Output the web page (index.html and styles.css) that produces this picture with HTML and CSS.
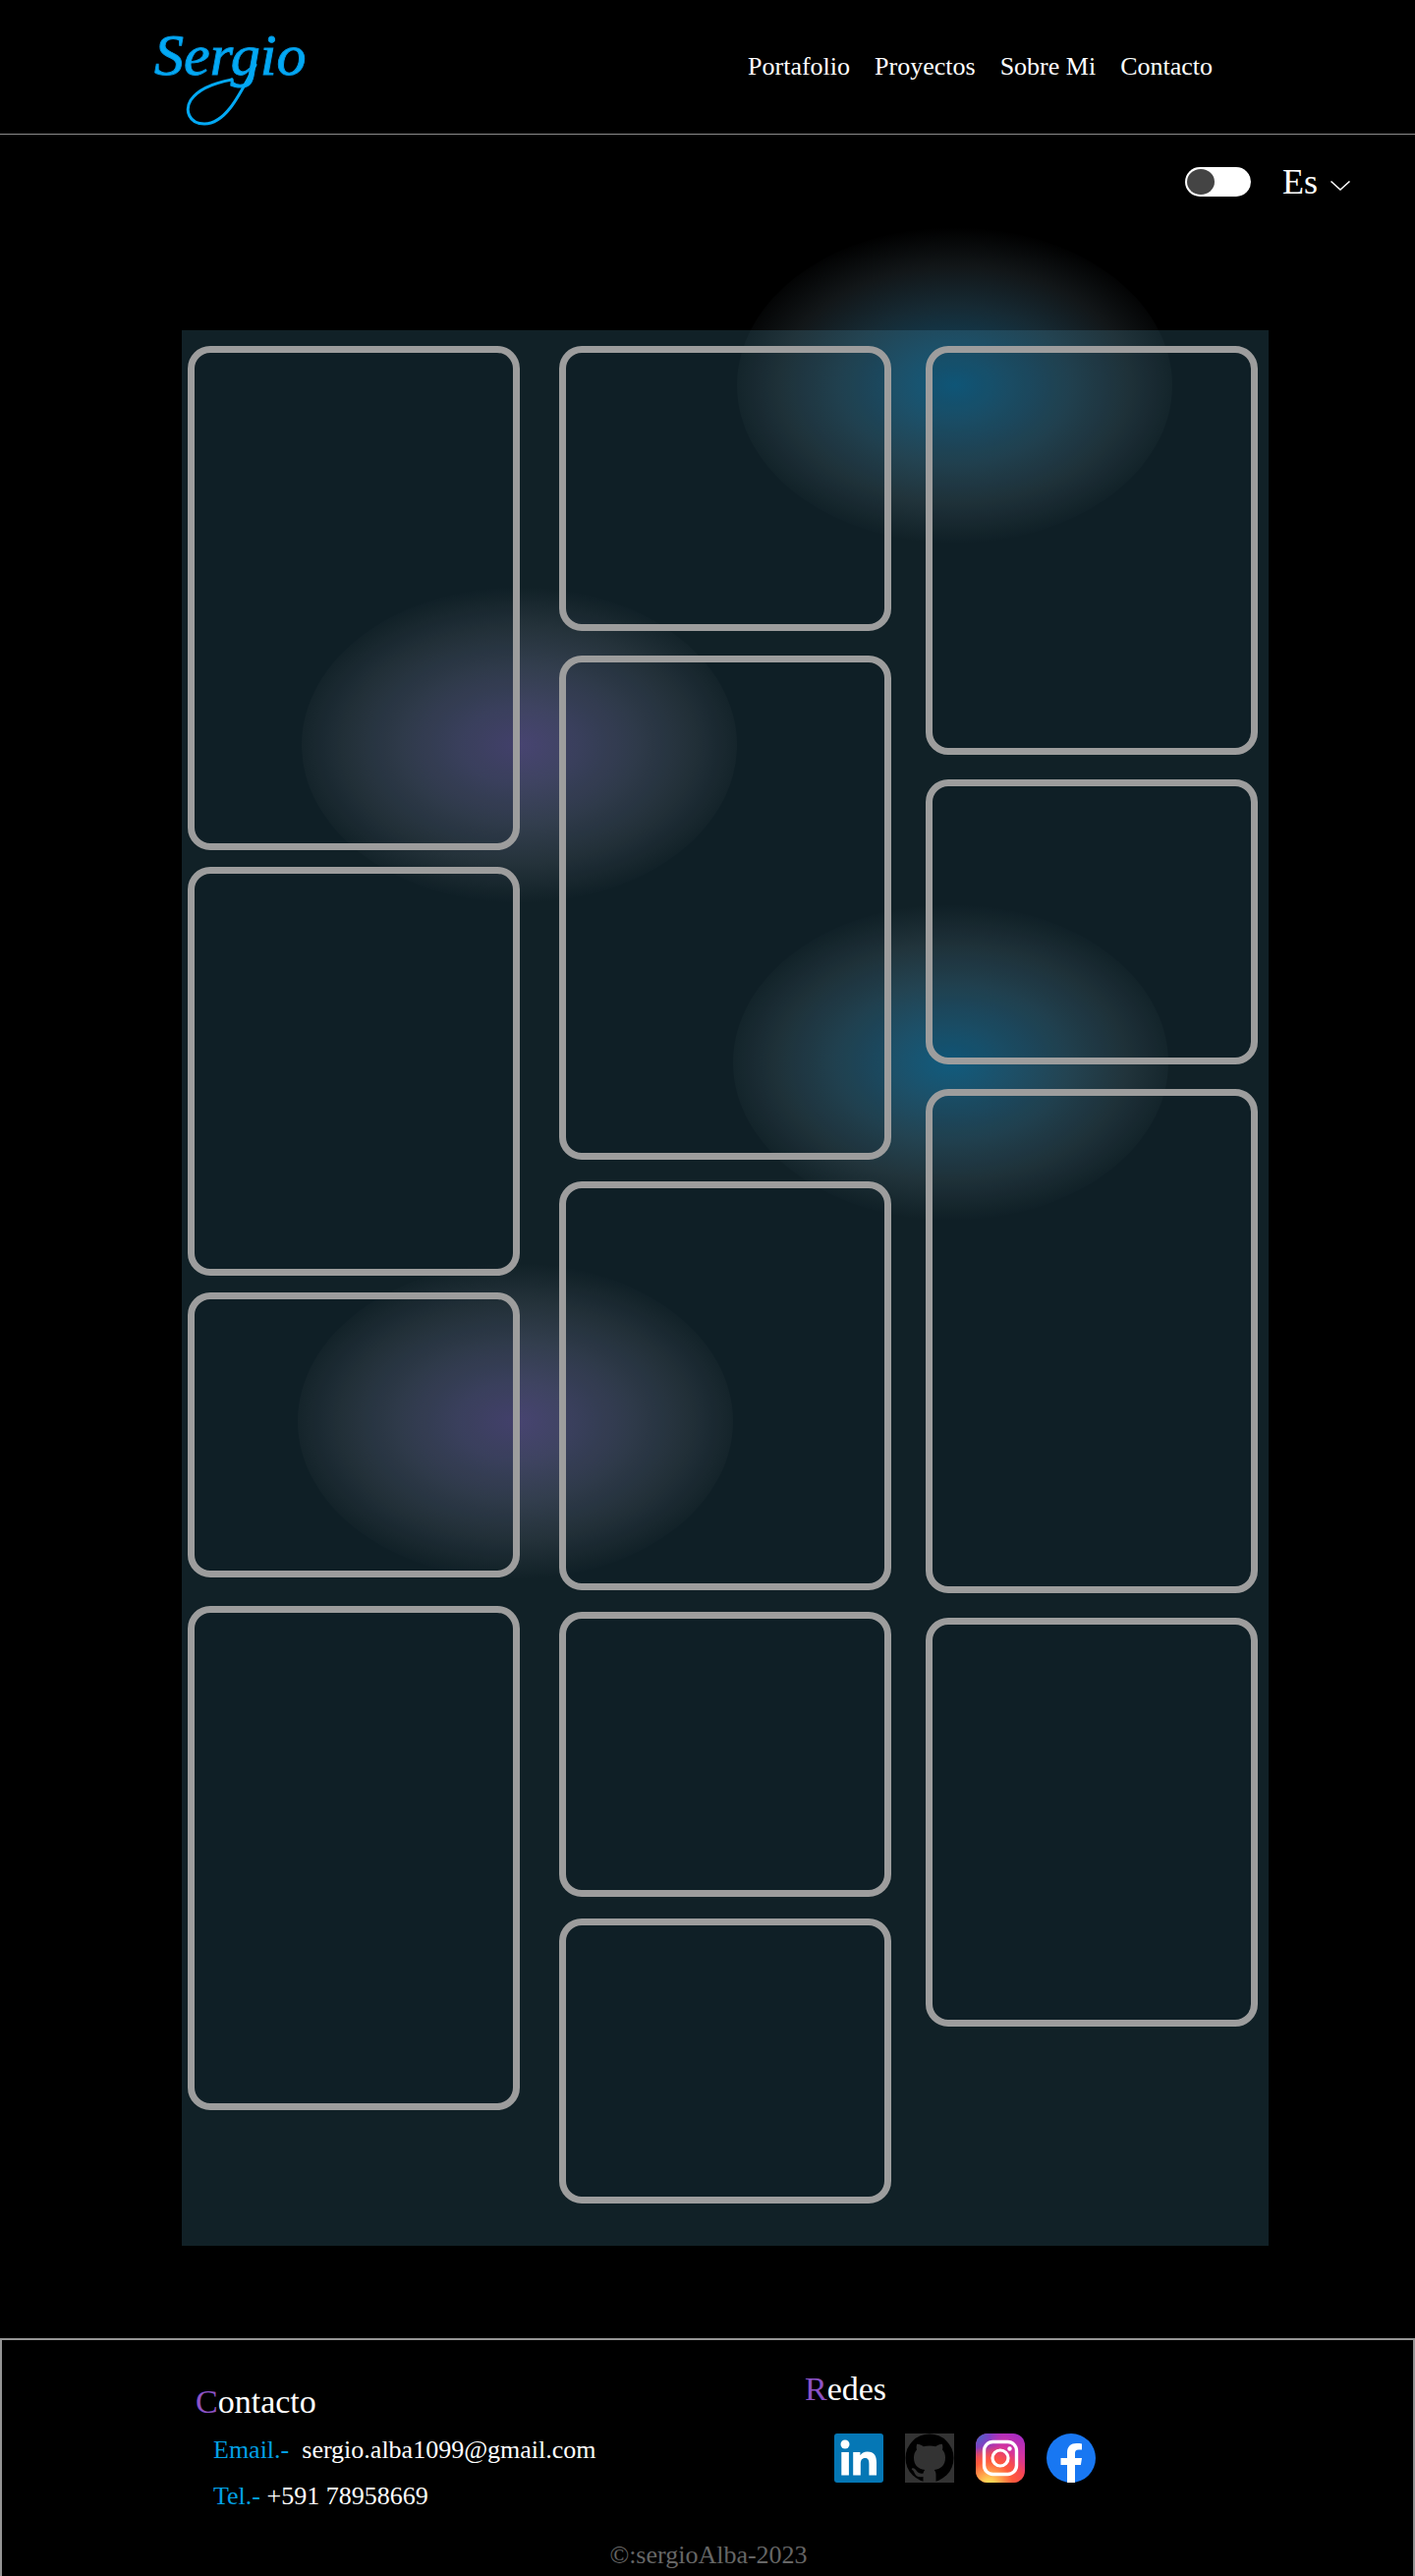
FILE: index.html
```html
<!DOCTYPE html>
<html lang="es">
<head>
<meta charset="utf-8">
<meta name="viewport" content="width=device-width, initial-scale=1">
<title>Sergio - Portafolio</title>
<link rel="stylesheet" href="styles.css">
</head>
<body>
<header class="header">
  <a class="logo" href="#" aria-label="Sergio">
    <svg width="165" height="116" viewBox="0 0 165 116">
      <text class="logo-text" x="3" y="60">Sergio</text>
      <path class="logo-tail" d="M106 50C90 80 76 110 54 110C38 110 34 96 40 86C48 74 66 68 82 65"/>
    </svg>
  </a>
  <nav class="nav">
    <a href="#portafolio">Portafolio</a>
    <a href="#proyectos">Proyectos</a>
    <a href="#sobre-mi">Sobre Mi</a>
    <a href="#contacto">Contacto</a>
  </nav>
</header>

<div class="settings">
  <input class="switch" type="checkbox" role="switch" aria-label="Tema">
  <label class="language">
    <select class="language-select" aria-label="Idioma"><option>Es</option></select>
    <svg width="20" height="10" viewBox="0 0 20 10" fill="none" stroke="#fff" stroke-width="1.500"><path d="M.5.5 10 9l9.500-8.500"/></svg>
  </label>
</div>

<main class="gallery" id="proyectos">
  <div class="glow glow-blue glow-a"></div>
  <div class="glow glow-purple glow-b"></div>
  <div class="glow glow-blue glow-c"></div>
  <div class="glow glow-purple glow-d"></div>
  <div class="column column-first">
    <article class="card card-tall"></article>
    <article class="card card-medium"></article>
    <article class="card card-small card-spaced"></article>
    <article class="card card-tall"></article>
  </div>
  <div class="column column-middle">
    <article class="card card-small card-lead"></article>
    <article class="card card-tall"></article>
    <article class="card card-medium"></article>
    <article class="card card-small"></article>
    <article class="card card-small"></article>
  </div>
  <div class="column column-last">
    <article class="card card-medium"></article>
    <article class="card card-small"></article>
    <article class="card card-tall"></article>
    <article class="card card-medium"></article>
  </div>
</main>

<footer class="footer" id="contacto">
  <div class="footer-columns">
    <section class="contact">
      <h2 class="title"><span class="initial">C</span>ontacto</h2>
      <p class="line"><span class="key">Email.-</span>&nbsp; <a href="mailto:sergio.alba1099@gmail.com">sergio.alba1099@gmail.com</a></p>
      <p class="line"><span class="key">Tel.-</span> <a href="tel:+59178958669">+591 78958669</a></p>
    </section>
    <section class="social">
      <h2 class="title"><span class="initial">R</span>edes</h2>
      <div class="icons">
        <a href="#linkedin" aria-label="LinkedIn"><svg width="50" height="50" viewBox="0 0 50 50">
          <rect width="50" height="50" rx="3" fill="#0577b5"/>
          <g fill="#fff"><circle cx="11" cy="11" r="4.500"/><path d="M7.300 19h7.600v23.500H7.300zM19.200 19h7.200v3.200c1.400-2.400 4-3.800 7.300-3.800 7 0 9.300 4.300 9.300 11.200v12.900h-7.600V31c0-3.500-.7-6-4-6-3.400 0-4.600 2.300-4.600 6v11.500h-7.600z"/></g>
        </svg></a>
        <a href="#github" aria-label="GitHub"><svg width="50" height="50" viewBox="0 0 50 50">
          <rect width="50" height="50" fill="#333"/>
          <circle cx="25" cy="25" r="24.500" fill="#000"/>
          <path fill="#333" d="M18.500 50v-6c-5 1.200-7.500-.6-9-4-.8-1.800-1.500-2.700-2.700-3.500 0-1.500 2.200-1.500 3.500-.2 2.600 3 3.500 5.200 8.300 4.200.2-1.600.8-2.700 1.700-3.600C13 36 9 32 9 24.500c0-3.300 1-6 3-8-.6-2-.5-4 .2-5.800 2.500 0 4.600 1.200 6.600 2.600 4-1 8.400-1 12.400 0 2-1.400 4.100-2.600 6.600-2.600.7 1.800.8 3.800.2 5.800 2 2 3 4.700 3 8 0 7.500-4 11.500-11.300 12.400 1.200 1.200 1.800 2.800 1.800 5V50z"/>
        </svg></a>
        <a href="#instagram" aria-label="Instagram"><svg width="50" height="50" viewBox="0 0 50 50">
          <defs>
            <linearGradient id="ig-base" x1="0.300" y1="1" x2="0.800" y2="0"><stop offset="0" stop-color="#ff5c3a"/><stop offset=".4" stop-color="#f4415a"/><stop offset=".7" stop-color="#d233a0"/><stop offset="1" stop-color="#a82cc4"/></linearGradient>
            <radialGradient id="ig-warm" cx=".27" cy="1.050" r=".8"><stop offset="0" stop-color="#ffdc55"/><stop offset=".15" stop-color="#ffd055"/><stop offset=".6" stop-color="#ff5c3c" stop-opacity=".95"/><stop offset="1" stop-color="#ff543e" stop-opacity="0"/></radialGradient>
            <radialGradient id="ig-cool" cx="0" cy="0" r=".6"><stop offset="0" stop-color="#3771c8"/><stop offset=".5" stop-color="#7a3fc9" stop-opacity=".9"/><stop offset="1" stop-color="#a030c8" stop-opacity="0"/></radialGradient>
          </defs>
          <rect width="50" height="50" rx="12" fill="url(#ig-base)"/><rect width="50" height="50" rx="12" fill="url(#ig-cool)"/><rect width="50" height="50" rx="12" fill="url(#ig-warm)"/>
          <rect x="8.500" y="8.500" width="33" height="33" rx="9" fill="none" stroke="#fff" stroke-width="3.400"/>
          <circle cx="25" cy="25" r="8" fill="none" stroke="#fff" stroke-width="3.200"/><circle cx="34.500" cy="15.500" r="2.200" fill="#fff"/>
        </svg></a>
        <a href="#facebook" aria-label="Facebook"><svg width="50" height="50" viewBox="0 0 50 50">
          <circle cx="25" cy="25" r="25" fill="#1877f2"/>
          <path fill="#fff" d="M21 50V32h-6.500v-7H21v-5.500C21 13 25 10 30.500 10c2.200 0 4 .2 5.500.4v6h-3.200c-3 0-3.800 1.600-3.800 3.600v5h7l-1.100 7H29v18z"/>
        </svg></a>
      </div>
    </section>
  </div>
  <p class="copyright">©:sergioAlba-2023</p>
</footer>
</body>
</html>
```
FILE: styles.css
```css
* { box-sizing: border-box; }

body {
  margin: 0;
  background: #000;
  color: #fff;
  font-family: "Liberation Serif", serif;
  font-size: 26px;
  line-height: 30px;
}

a { color: inherit; text-decoration: none; }
svg { display: block; }

.header {
  display: flex;
  justify-content: space-between;
  align-items: flex-start;
  min-height: 137px;
  padding: 16px 206px 0 154px;
  border-bottom: 1px solid #8c8c8c;
}

.logo-text {
  fill: #03a9f4;
  stroke: #0399e4;
  stroke-width: 1px;
  font-size: 60px;
  font-style: italic;
}

.logo-tail {
  fill: none;
  stroke: #03a9f4;
  stroke-width: 3px;
  stroke-linecap: round;
}

.nav { display: flex; gap: 25px; padding-top: 37px; }

.settings {
  display: flex;
  justify-content: flex-end;
  align-items: center;
  gap: 32px;
  padding: 27px 66px 0 0;
}

.switch {
  appearance: none;
  display: flex;
  align-items: center;
  width: 67px;
  height: 30px;
  margin: 0;
  padding: 2px;
  border-radius: 15px;
  background: #fff;
}

.switch::before {
  content: "";
  width: 28px;
  height: 26px;
  border-radius: 50%;
  background: #444;
}

.switch:checked { justify-content: flex-end; }

.language { display: flex; align-items: center; gap: 13px; }
.language svg { margin-top: 8px; }

.language-select {
  appearance: none;
  width: 36px;
  padding: 0;
  border: 0;
  background: transparent;
  color: #fff;
  font: 36px/42px "Liberation Serif", serif;
}

.gallery {
  position: relative;
  display: flex;
  margin: 130px 149px 94px 185px;
  padding: 16px 11px 43px 6px;
  background: #112127;
}

.column { position: relative; display: flex; flex: 1; flex-direction: column; }
.column-first { gap: 17px; margin-right: 40px; }
.column-middle { gap: 22px; margin-right: 35px; }
.column-last { gap: 25px; }

.card {
  border: 7px solid #9d9d9d;
  border-radius: 23px;
  background: rgba(0, 20, 30, 0.07);
}

.card-small { height: 290px; }
.card-medium { height: 416px; }
.card-tall { height: 513px; }
.card-spaced { margin-bottom: 12px; }
.card-lead { margin-bottom: 3px; }

/* Soft lights that float behind the cards and spill over the panel edge */
.glow {
  position: absolute;
  width: 443px;
  height: 322px;
  border-radius: 50%;
  pointer-events: none;
}

.glow-blue {
  background: radial-gradient(ellipse 54% 50%, rgba(16, 172, 246, 0.42), rgba(52, 176, 238, 0.33) 25%, rgba(100, 190, 234, 0.22) 50%, rgba(163, 203, 222, 0.11) 75%, rgba(217, 217, 217, 0));
}

.glow-purple {
  background: radial-gradient(ellipse 54% 50%, rgba(146, 116, 215, 0.42), rgba(155, 137, 215, 0.33) 25%, rgba(170, 165, 216, 0.22) 50%, rgba(194, 190, 216, 0.11) 75%, rgba(217, 217, 217, 0));
}

.glow-a { top: -105px; right: 98px; }
.glow-b { top: 261px; left: 122px; }
.glow-c { top: 584px; right: 102px; }
.glow-d { top: 949px; left: 118px; }

.footer {
  padding: 31px 195px 0 197px;
  border: 2px solid #959595;
  border-bottom: 0;
}

.footer-columns { display: flex; min-height: 159px; }
.contact { flex: 0 1 620px; padding-top: 13px; }
.title { margin: 0; font-size: 34px; font-weight: 400; line-height: 38px; }
.initial { color: #8c52c6; }
.key { color: #03a0e4; }
.line { margin: 0 0 17px 18px; }
.line:last-child { margin-bottom: 0; }
.contact .title { margin-bottom: 15px; }

.icons { display: flex; gap: 22px; padding: 26px 0 0 30px; }

.copyright {
  margin: 14px 0 0;
  padding-bottom: 6px;
  color: #666;
  text-align: center;
}
```
